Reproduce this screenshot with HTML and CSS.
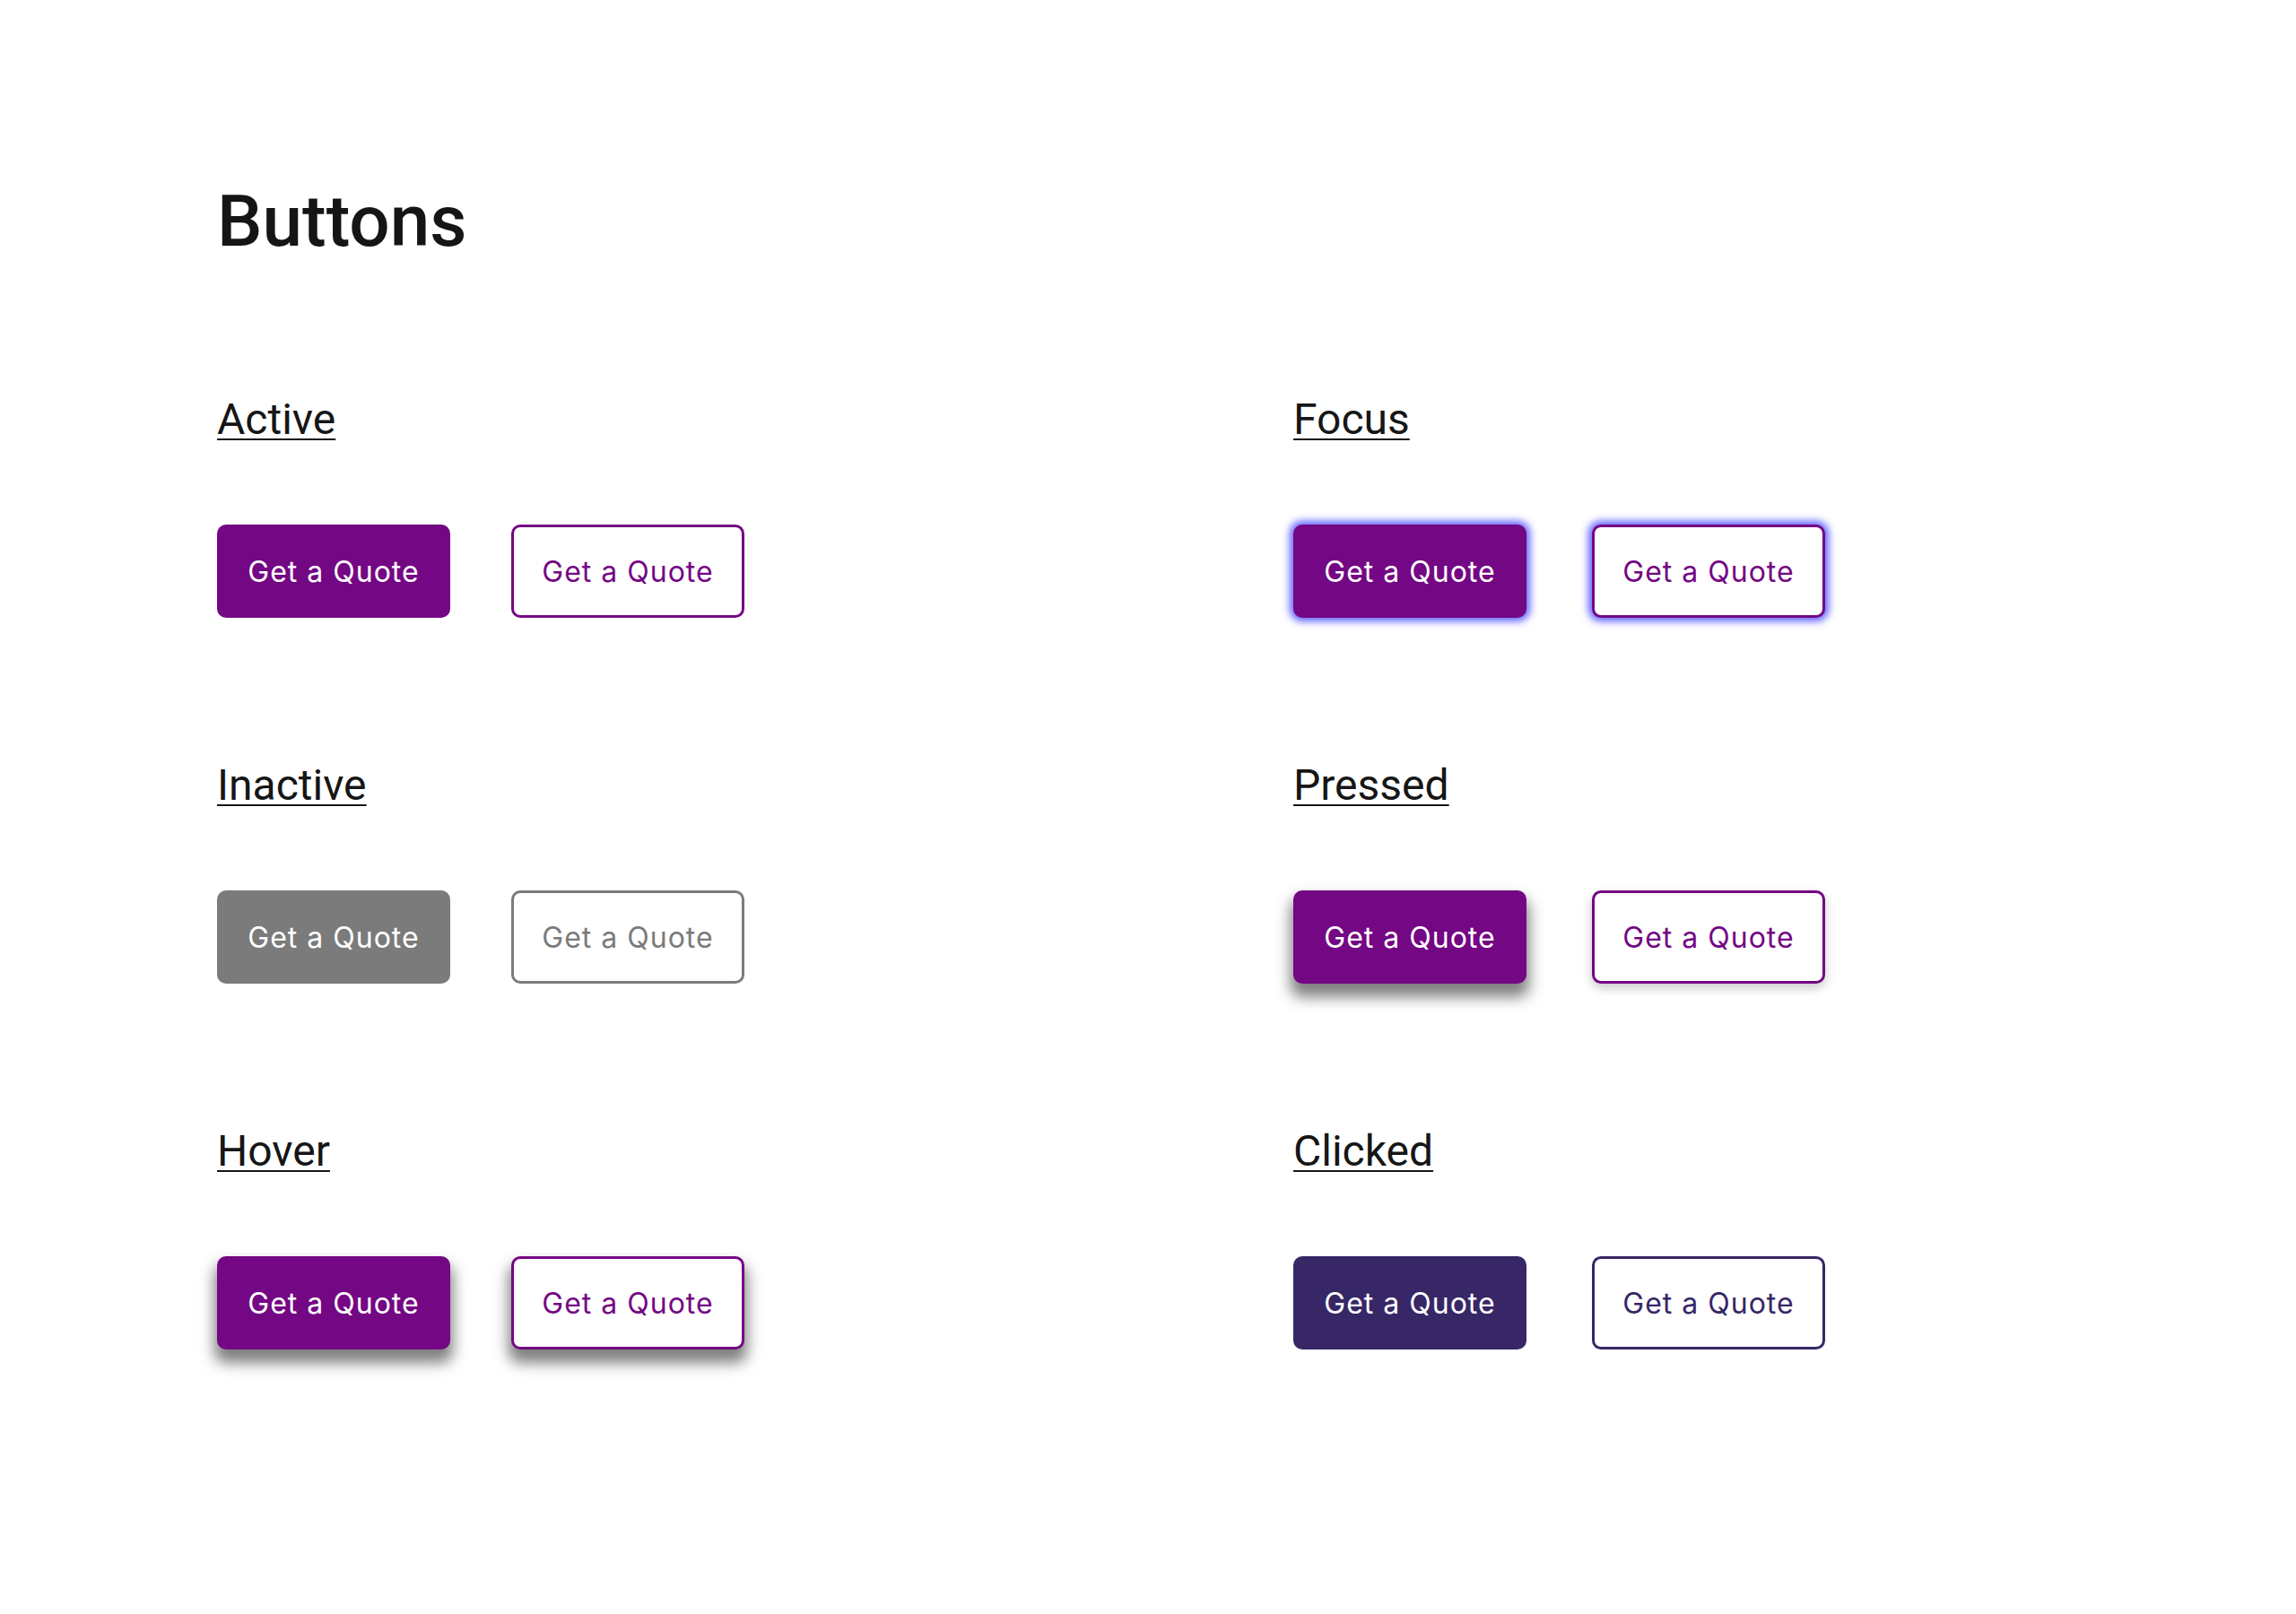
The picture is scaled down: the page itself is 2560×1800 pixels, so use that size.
FILE: index.html
```html
<!DOCTYPE html>
<html lang="en">
<head>
<meta charset="utf-8">
<title>Buttons</title>
<link rel="stylesheet" href="styles.css">
</head>
<body>
<main class="page">
  <h1 class="title">Buttons</h1>
  <div class="states">
    <section class="state">
      <h2 class="state-title">Active</h2>
      <div class="btn-row">
        <button class="btn btn-primary">Get a Quote</button>
        <button class="btn btn-outline">Get a Quote</button>
      </div>
    </section>
    <section class="state state--right">
      <h2 class="state-title">Focus</h2>
      <div class="btn-row">
        <button class="btn btn-primary is-focus">Get a Quote</button>
        <button class="btn btn-outline is-focus">Get a Quote</button>
      </div>
    </section>
    <section class="state">
      <h2 class="state-title">Inactive</h2>
      <div class="btn-row">
        <button class="btn btn-primary is-inactive">Get a Quote</button>
        <button class="btn btn-outline is-inactive">Get a Quote</button>
      </div>
    </section>
    <section class="state state--right">
      <h2 class="state-title">Pressed</h2>
      <div class="btn-row">
        <button class="btn btn-primary is-pressed">Get a Quote</button>
        <button class="btn btn-outline is-pressed">Get a Quote</button>
      </div>
    </section>
    <section class="state">
      <h2 class="state-title">Hover</h2>
      <div class="btn-row">
        <button class="btn btn-primary is-hover">Get a Quote</button>
        <button class="btn btn-outline is-hover">Get a Quote</button>
      </div>
    </section>
    <section class="state state--right">
      <h2 class="state-title">Clicked</h2>
      <div class="btn-row">
        <button class="btn btn-primary is-clicked">Get a Quote</button>
        <button class="btn btn-outline is-clicked">Get a Quote</button>
      </div>
    </section>
  </div>
</main>
</body>
</html>
```
FILE: styles.css
```css
* { box-sizing: border-box; }

html, body {
  margin: 0;
  padding: 0;
}

body {
  background: #ffffff;
  font-family: Roboto, "Liberation Sans", sans-serif;
  color: #161616;
}

.page {
  padding: 207px 0 240px 242px;
}

.title {
  margin: 0;
  font-family: Roboto, sans-serif;
  font-weight: 500;
  font-size: 80px;
  line-height: 80px;
  color: #151515;
}

.states {
  margin-top: 157px;
  display: grid;
  grid-template-columns: 1200px 1200px;
  row-gap: 163px;
}

.state-title {
  margin: 0 0 93px 0;
  font-family: Roboto, sans-serif;
  font-weight: 400;
  font-size: 48px;
  line-height: 48px;
  color: #161616;
  text-decoration: underline;
  text-decoration-thickness: 2px;
  text-underline-offset: 5px;
}

.btn-row {
  display: flex;
  gap: 68px;
}

.state--right .btn-row {
  gap: 73px;
}

.btn {
  width: 260px;
  height: 104px;
  padding: 0;
  border-radius: 10px;
  font-family: Inter, "Open Sans", sans-serif;
  font-weight: 400;
  font-size: 32px;
  letter-spacing: 1px;
  cursor: pointer;
  display: flex;
  align-items: center;
  justify-content: center;
}

.btn-primary {
  background: #740784;
  color: #ffffff;
  border: none;
}

.btn-outline {
  background: #ffffff;
  color: #740784;
  border: 3px solid #740784;
}

.is-focus {
  box-shadow: 0 0 8px 4px rgba(72, 72, 255, 0.85);
}

.btn-primary.is-inactive {
  background: #7b7b7b;
}

.btn-outline.is-inactive {
  color: #7b7b7b;
  border-color: #7b7b7b;
}

.btn-primary.is-pressed {
  box-shadow: 0 12px 16px 3px rgba(0, 0, 0, 0.5);
}

.btn-outline.is-pressed {
  box-shadow: 0 5px 12px rgba(0, 0, 0, 0.22);
}

.is-hover {
  box-shadow: 0 12px 16px 3px rgba(0, 0, 0, 0.5);
}

.btn-primary.is-clicked {
  background: #372766;
}

.btn-outline.is-clicked {
  color: #372766;
  border-color: #372766;
}
```
